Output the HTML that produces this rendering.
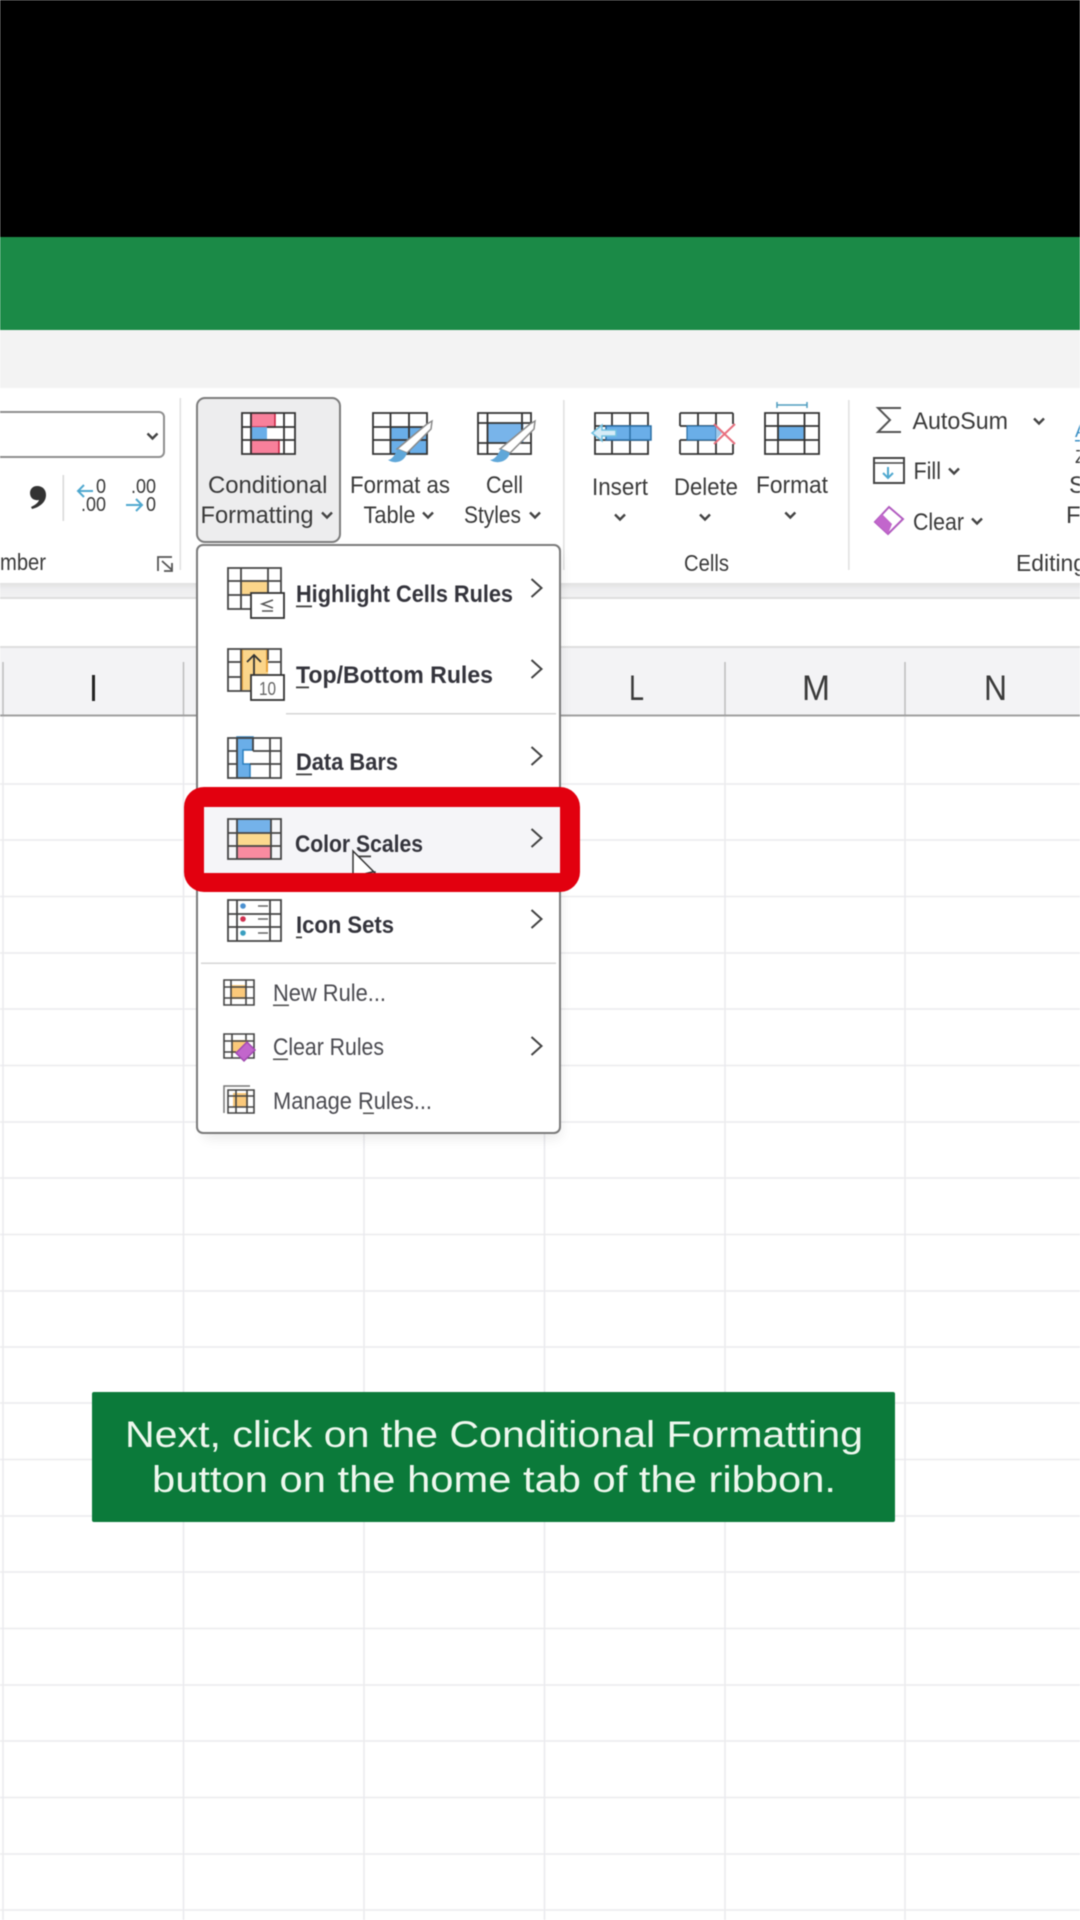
<!DOCTYPE html>
<html><head><meta charset="utf-8"><style>
html,body{margin:0;padding:0;background:#fff;width:1080px;height:1920px;overflow:hidden}
svg{display:block;filter:blur(.6px)}
text{font-family:"Liberation Sans",sans-serif;fill:#3a3a3a;font-size:24px}
.b{font-weight:bold;fill:#34343c}
.m{fill:#4a4a50}
</style></head><body>
<svg width="1080" height="1920" viewBox="0 0 1080 1920" xmlns="http://www.w3.org/2000/svg">
<defs>
<path id="dn" d="M-5-2.5L0 2.5L5-2.5" fill="none" stroke="#444" stroke-width="2.4"/>
<path id="gt" d="M-5-9L5 0L-5 9" fill="none" stroke="#444" stroke-width="2"/>
<linearGradient id="sh" x1="0" y1="0" x2="0" y2="1"><stop offset="0" stop-color="#e0e0e0"/><stop offset=".4" stop-color="#eeeeef"/><stop offset="1" stop-color="#f2f2f3"/></linearGradient>
</defs>
<rect width="1080" height="1920" fill="#fff"/>
<rect width="1080" height="237" fill="#000"/>
<rect y="237" width="1080" height="93" fill="#1b8a47"/>
<rect y="330" width="1080" height="58" fill="#f3f3f3"/>
<rect y="583" width="1080" height="15" fill="url(#sh)"/>
<rect y="597" width="1080" height="2" fill="#dedede"/>
<rect y="647" width="1080" height="69" fill="#f3f3f5"/>
<rect y="646" width="1080" height="2" fill="#dedede"/>

<g stroke="#ebebee" stroke-width="1.6">
<path d="M3 716V1920M183.500 716V1920M364 716V1920M544.500 716V1920M725 716V1920M905 716V1920"/>
<path d="M0 784H1080M0 840H1080M0 896.500H1080M0 953H1080M0 1009H1080M0 1065.500H1080M0 1122H1080M0 1178H1080M0 1234.500H1080M0 1291H1080M0 1347H1080M0 1403H1080M0 1459.500H1080M0 1516H1080M0 1572H1080M0 1628.500H1080M0 1685H1080M0 1741H1080M0 1797.500H1080M0 1854H1080M0 1910H1080"/>
</g>
<g stroke="#bdbdbd" stroke-width="1.5"><path d="M3 662V716M183.500 662V716M725 662V716M905 662V716"/></g>
<rect y="714.500" width="1080" height="2" fill="#a0a0a0"/>
<rect x="92" y="675" width="3" height="26" fill="#222"/>
<text x="629" y="700" style="font-size:35px" textLength="15" lengthAdjust="spacingAndGlyphs">L</text>
<text x="802" y="700" style="font-size:35px" textLength="28" lengthAdjust="spacingAndGlyphs">M</text>
<text x="984" y="700" style="font-size:35px" textLength="23" lengthAdjust="spacingAndGlyphs">N</text>

<!-- number group -->
<path d="M-4 412H159a5 5 0 0 1 5 5V452a5 5 0 0 1-5 5H-4z" fill="#fff" stroke="#8f8f8f" stroke-width="2"/>
<use href="#dn" x="152.500" y="436"/>
<path d="M37 486c6 0 9 4 9 9 0 7-6 12-14 14l-1-2c4-2 7-4 8-7-5 1-9-2-9-7 0-4 3-7 7-7z" fill="#333"/>
<rect x="62.500" y="475" width="1.600" height="46" fill="#dadada"/>
<path d="M93 491H78M84 485l-6 6 6 6" fill="none" stroke="#4fa8cf" stroke-width="2"/>
<text x="96" y="493" style="font-size:20px" textLength="10" lengthAdjust="spacingAndGlyphs">0</text>
<text x="81" y="511" style="font-size:20px" textLength="25" lengthAdjust="spacingAndGlyphs">.00</text>
<text x="131" y="493" style="font-size:20px" textLength="25" lengthAdjust="spacingAndGlyphs">.00</text>
<path d="M126 505H142M136 499l6 6-6 6" fill="none" stroke="#4fa8cf" stroke-width="2"/>
<text x="146" y="511" style="font-size:20px" textLength="10" lengthAdjust="spacingAndGlyphs">0</text>
<text x="0" y="570" style="font-size:23px" textLength="46" lengthAdjust="spacingAndGlyphs" fill="#444">mber</text>
<g fill="none" stroke="#555" stroke-width="1.800"><path d="M172 557H158V571"/><path d="M162 561L172 570M172 563V571H164"/></g>
<rect x="179.500" y="398" width="1.600" height="172" fill="#e2e2e2"/>
<rect x="563" y="400" width="1.600" height="170" fill="#e2e2e2"/>
<rect x="848" y="400" width="1.600" height="170" fill="#e2e2e2"/>

<!-- conditional formatting button -->
<rect x="197" y="398" width="143" height="144" rx="8" fill="#ededee" stroke="#7c7c7c" stroke-width="2"/>
<g>
<rect x="242" y="413" width="53" height="41" fill="#fff"/>
<path d="M251 413H275V427H251zM251 440H279V454H251z" fill="#f8809b" stroke="#c8203f" stroke-width="1.500"/>
<rect x="251" y="427" width="16" height="13" fill="#6aaee8"/>
<path d="M242 413H295V454H242zM242 427H251M267 427H295M242 440H295M251 413V454M284 413V454" fill="none" stroke="#333" stroke-width="1.800"/>
</g>
<text x="208" y="493" textLength="119.500" lengthAdjust="spacingAndGlyphs">Conditional</text>
<text x="200.500" y="523" textLength="113" lengthAdjust="spacingAndGlyphs">Formatting</text>
<use href="#dn" x="327" y="515"/>

<!-- format as table -->
<rect x="390" y="427" width="37" height="27" fill="#6aaee8"/>
<path d="M373 413H427V454H373zM373 427H427M373 440H427M390.500 413V454M409 413V454" fill="none" stroke="#333" stroke-width="1.800"/>
<path d="M427 424L432 421 431 429 407 453 397 449z" fill="#fff" stroke="#8a8a8a" stroke-width="1.500"/>
<path d="M398 449c-3 5-5 10-10 11 6 4 16 3 19-7z" fill="#5fa7d9"/>
<text x="350" y="493" textLength="100" lengthAdjust="spacingAndGlyphs">Format as</text>
<text x="363.500" y="523" textLength="52" lengthAdjust="spacingAndGlyphs">Table</text>
<use href="#dn" x="428" y="515"/>

<!-- cell styles -->
<rect x="487.500" y="423" width="36" height="20" fill="#78b4ea"/>
<path d="M478 413H531V454H478zM478 423H531M478 443H531M487.500 413V454M522 413V430" fill="none" stroke="#333" stroke-width="1.800"/>
<path d="M530 424L535 421 534 429 510 453 500 449z" fill="#fff" stroke="#8a8a8a" stroke-width="1.500"/>
<path d="M501 449c-3 5-5 10-11 11 6 4 17 3 20-7z" fill="#5fa7d9"/>
<text x="486" y="493" textLength="37" lengthAdjust="spacingAndGlyphs">Cell</text>
<text x="464" y="523" textLength="57" lengthAdjust="spacingAndGlyphs">Styles</text>
<use href="#dn" x="535" y="515"/>

<!-- insert -->
<path d="M595 413H648V454H595zM595 426H648M595 440H648M612 413V454M630 413V454" fill="none" stroke="#333" stroke-width="1.800"/>
<rect x="606" y="426" width="45" height="14" fill="#6aaee8" stroke="#2a6fa5" stroke-width="1.500"/>
<path d="M630 426V440" stroke="#2a6fa5" stroke-width="1.500"/>
<path d="M616 430H602V425L592 433 602 441V436H616z" fill="#d6ecf7" stroke="#6fbfe0" stroke-width="1.500"/>
<text x="592" y="495" textLength="56" lengthAdjust="spacingAndGlyphs">Insert</text>
<use href="#dn" x="620" y="517"/>

<!-- delete -->
<path d="M680 413H733M680 454H733M680 413V426M680 440V454M733 413V424M733 444V454M698 413V426M698 440V454M716 413V426M716 440V454M680 426H716M680 440H716" fill="none" stroke="#333" stroke-width="1.800"/>
<rect x="687" y="426" width="29" height="14" fill="#6aaee8" stroke="#2a6fa5" stroke-width="1.200"/>
<path d="M716 426L722 433 716 440z" fill="#9ec8ea"/>
<path d="M714 424L735 444M735 424L714 444" stroke="#e8707f" stroke-width="2" fill="none"/>
<text x="674" y="495" textLength="64" lengthAdjust="spacingAndGlyphs">Delete</text>
<use href="#dn" x="705" y="517"/>

<!-- format -->
<rect x="778" y="426" width="26.500" height="14" fill="#6aaee8"/>
<path d="M765 413H819V454H765zM765 426H819M765 440H819M778 413V454M804.500 413V454" fill="none" stroke="#333" stroke-width="1.800"/>
<path d="M777 405H807M777 402V408M807 402V408" stroke="#4f9dbf" stroke-width="1.500" fill="none"/>
<text x="756" y="493" textLength="72" lengthAdjust="spacingAndGlyphs">Format</text>
<use href="#dn" x="790.300" y="515"/>
<text x="684" y="571" style="font-size:23px" textLength="45" lengthAdjust="spacingAndGlyphs" fill="#444">Cells</text>

<!-- editing -->
<path d="M901 408H878L890 420 878 432H901" fill="none" stroke="#555" stroke-width="2"/>
<text x="912.500" y="429" textLength="95.500" lengthAdjust="spacingAndGlyphs">AutoSum</text>
<use href="#dn" x="1039" y="421"/>
<rect x="874" y="458" width="30" height="25" fill="#fff" stroke="#444" stroke-width="2"/>
<path d="M874 463H904" stroke="#444" stroke-width="1.500"/>
<path d="M888 467V478M883 473L888 478 893 473" fill="none" stroke="#4fa8cf" stroke-width="2"/>
<text x="913.500" y="479" textLength="27.500" lengthAdjust="spacingAndGlyphs">Fill</text>
<use href="#dn" x="954" y="471"/>
<path d="M889 507L903 519 888 534 875 522z" fill="#fff" stroke="#b25cc0" stroke-width="2"/>
<path d="M882 514L892 524 888 534 875 522z" fill="#c266cc"/>
<text x="913" y="530" textLength="51" lengthAdjust="spacingAndGlyphs">Clear</text>
<use href="#dn" x="977" y="521"/>
<text x="1075" y="437" style="font-size:18px;fill:#3a8fc4">A</text>
<rect x="1075" y="440" width="6" height="1.500" fill="#3a8fc4"/>
<text x="1075" y="463" style="font-size:18px">Z</text>
<text x="1069" y="493">S</text>
<text x="1066" y="523">Fi</text>
<text x="1016" y="571" style="font-size:23px" textLength="70" lengthAdjust="spacingAndGlyphs" fill="#444">Editing</text>

<!-- menu -->
<rect x="203" y="551" width="358" height="588" fill="#000" opacity=".08" rx="6" style="filter:blur(6px)"/>
<rect x="197" y="545" width="363" height="588" rx="6" fill="#fff" stroke="#7a7a7a" stroke-width="2"/>

<!-- highlight -->
<rect x="241" y="581" width="27" height="14" fill="#fbd58a" stroke="#e8a33c" stroke-width="1.200"/>
<path d="M228 568H281V609H228zM228 581H281M228 595H281M241 568V609M268 568V609" fill="none" stroke="#444" stroke-width="1.800"/>
<rect x="251" y="593" width="33" height="25" fill="#fff" stroke="#333" stroke-width="1.800"/>
<path d="M273 600L262 604 273 608M262 611H273" fill="none" stroke="#555" stroke-width="1.500"/>
<text x="296" y="602" class="b" textLength="217" lengthAdjust="spacingAndGlyphs">Highlight Cells Rules</text>
<rect x="296" y="605.500" width="16" height="1.800" fill="#444"/>
<use href="#gt" x="536.500" y="588"/>

<!-- top bottom -->
<rect x="241" y="649" width="27" height="41" fill="#fbd58a"/>
<path d="M242 649V690M267 649V672" stroke="#e8a33c" stroke-width="2"/>
<path d="M228 649H281V691H228zM228 662H241M268 662H281M228 677H241M241 649V691M268 649V660" fill="none" stroke="#444" stroke-width="1.800"/>
<path d="M254 678V655M247 662L254 655 261 662" fill="none" stroke="#333" stroke-width="1.800"/>
<rect x="251" y="675" width="33" height="25" fill="#fff" stroke="#333" stroke-width="1.800"/>
<text x="259" y="695" style="font-size:18px;fill:#666" textLength="17" lengthAdjust="spacingAndGlyphs">10</text>
<text x="296" y="683" class="b" textLength="197" lengthAdjust="spacingAndGlyphs">Top/Bottom Rules</text>
<rect x="296" y="686.500" width="13" height="1.800" fill="#444"/>
<use href="#gt" x="536.500" y="669"/>
<rect x="286" y="713" width="270" height="1.500" fill="#d5d5d5"/>

<!-- data bars -->
<path d="M237 737H253V750H243V764H250V778H237z" fill="#6aaee8" stroke="#2a7fbf" stroke-width="1.500"/>
<path d="M228 738H281V778H228zM228 751H237M253 751H281M228 764H237M250 764H281M237 738V778M253 738V751M270 738V778" fill="none" stroke="#444" stroke-width="1.800"/>
<text x="296" y="770" class="b" textLength="102" lengthAdjust="spacingAndGlyphs">Data Bars</text>
<rect x="296" y="773.500" width="16" height="1.800" fill="#444"/>
<use href="#gt" x="536.500" y="756"/>

<!-- color scales -->
<rect x="204" y="807" width="356" height="66" fill="#f5f5f8"/>
<rect x="237" y="819" width="34" height="14" fill="#74b2ea"/>
<rect x="237" y="833" width="34" height="13" fill="#fbd98e"/>
<rect x="237" y="846" width="34" height="13" fill="#f98ba0"/>
<path d="M228 819H281V859H228zM228 833H281M228 846H281M237 819V859M271 819V859" fill="none" stroke="#444" stroke-width="1.800"/>
<text x="295" y="852" class="b" textLength="128" lengthAdjust="spacingAndGlyphs">Color Scales</text>
<rect x="357" y="855.500" width="14" height="1.800" fill="#444"/>
<use href="#gt" x="536.500" y="838"/>
<path d="M353 851V875H360L372 872H375L375 873 353 851z" fill="#fff" stroke="#333" stroke-width="1.500"/>

<!-- red frame -->
<path fill-rule="evenodd" d="M204 787H560a20 20 0 0 1 20 20V872a20 20 0 0 1-20 20H204a20 20 0 0 1-20-20V807a20 20 0 0 1 20-20zM204 807V873H560V807z" fill="#e2000f"/>

<!-- icon sets -->
<path d="M228 900H281V941H228zM228 914H281M228 927H281M237 900V941M270 900V941" fill="none" stroke="#444" stroke-width="1.800"/>
<circle cx="243" cy="906" r="2.800" fill="#4a90d0"/><circle cx="243" cy="919" r="2.800" fill="#d0304f"/><circle cx="243" cy="933" r="2.800" fill="#3a9fc0"/>
<path d="M258 906H268M258 919H268M258 933H268" stroke="#666" stroke-width="1.500"/>
<text x="296" y="933" class="b" textLength="98" lengthAdjust="spacingAndGlyphs">Icon Sets</text>
<rect x="296" y="936.500" width="6" height="1.800" fill="#444"/>
<use href="#gt" x="536.500" y="919"/>
<rect x="201" y="962.500" width="355" height="1.500" fill="#d5d5d5"/>

<!-- new rule -->
<rect x="231" y="985" width="15" height="14" fill="#fbc97a"/>
<path d="M224 980H254V1005H224zM224 987H254M224 998H254M231 980V1005M246 980V1005" fill="none" stroke="#444" stroke-width="1.600"/>
<text x="273" y="1001" class="m" textLength="113" lengthAdjust="spacingAndGlyphs">New Rule...</text>
<rect x="273" y="1004.500" width="16" height="1.600" fill="#555"/>

<!-- clear rules -->
<rect x="232" y="1040" width="16" height="13" fill="#fbc97a"/>
<path d="M224 1034H254V1058H224zM224 1041H254M224 1052H236M232 1034V1058M246 1034V1040" fill="none" stroke="#444" stroke-width="1.600"/>
<path d="M247 1042L255 1050 244 1061 236 1053z" fill="#c266cc" stroke="#a04ab0" stroke-width="1.500"/>
<text x="273" y="1055" class="m" textLength="111" lengthAdjust="spacingAndGlyphs">Clear Rules</text>
<rect x="273" y="1058.500" width="15" height="1.600" fill="#555"/>
<use href="#gt" x="536.500" y="1046"/>

<!-- manage rules -->
<rect x="233" y="1093" width="15" height="14" fill="#fbc97a"/>
<path d="M224 1113V1086H250" fill="none" stroke="#777" stroke-width="1.500"/>
<path d="M228 1090H254V1113H228zM228 1096H254M228 1107H254M236 1090V1113M247 1090V1113" fill="none" stroke="#444" stroke-width="1.600"/>
<text x="273" y="1109" class="m" textLength="159" lengthAdjust="spacingAndGlyphs">Manage Rules...</text>
<rect x="363" y="1112.500" width="11" height="1.600" fill="#555"/>

<!-- caption -->
<rect x="92" y="1392" width="803" height="130" rx="2" fill="#0b7a3a"/>
<text x="125" y="1447" style="font-size:37px;fill:#eef8ee" textLength="738" lengthAdjust="spacingAndGlyphs">Next, click on the Conditional Formatting</text>
<text x="152" y="1492" style="font-size:37px;fill:#eef8ee" textLength="684" lengthAdjust="spacingAndGlyphs">button on the home tab of the ribbon.</text>
</svg>
</body></html>
